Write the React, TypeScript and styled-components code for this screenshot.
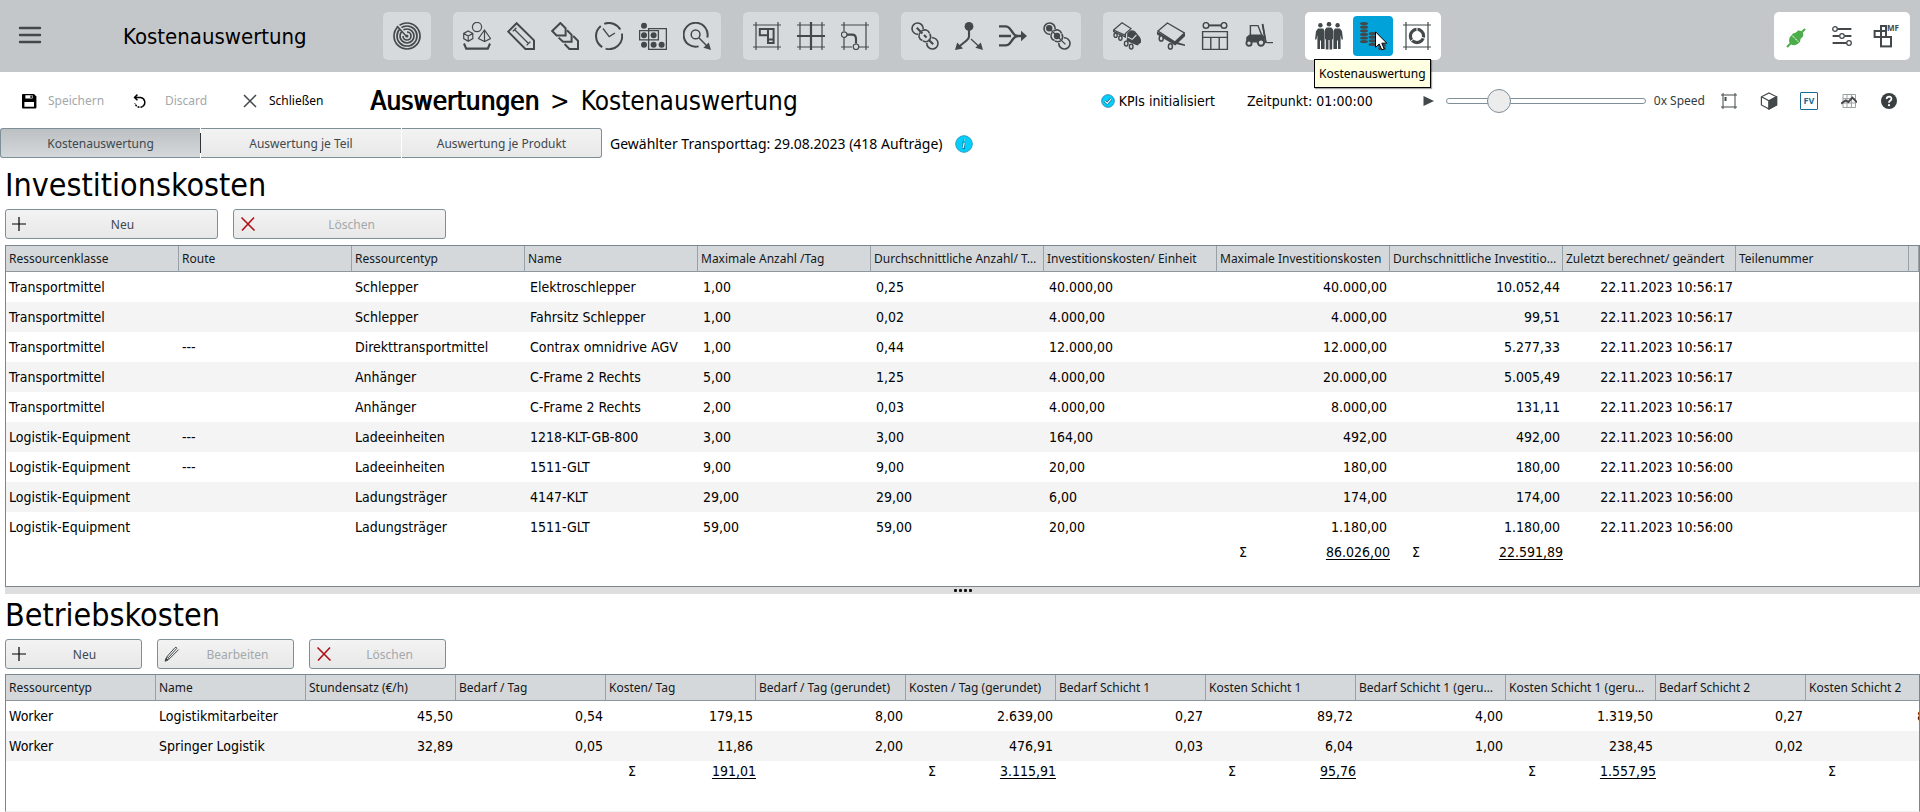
import React from "react";
import styled, { createGlobalStyle, css } from "styled-components";

const BODY_FONT = '"DejaVu Sans Condensed", "DejaVu Sans", sans-serif';
const SMALL_FONT = '"Noto Sans", "Open Sans", sans-serif';
const INK = "#43484b";
const LINE = "#7f8f98";

const GlobalStyle = createGlobalStyle`
  *, *::before, *::after { box-sizing: border-box; }
  body {
    margin: 0;
    background: #fff;
    color: #000;
    font-family: ${BODY_FONT};
    font-size: 14px;
  }
  button { font: inherit; color: inherit; padding: 0; margin: 0; border: 0; background: none; }
  h1, h2 { margin: 0; font-weight: 400; }
`;

/* ---------- page frame ---------- */

const Page = styled.div`
  display: flex;
  flex-direction: column;
  min-height: 100vh;
  overflow-x: hidden;
`;

const TopBar = styled.header`
  display: flex;
  align-items: center;
  height: 72px;
  padding-right: 10px;
  background: #c4c7ca;
`;

const TitleArea = styled.div`
  display: flex;
  align-items: center;
  flex: 0 0 383px;
  padding-left: 18px;
  gap: 81px;
`;

const AppTitle = styled.h1`
  padding-top: 2px;
  font-size: 22px;
  line-height: 28px;
`;

const Groups = styled.nav`
  display: flex;
  gap: 22px;
`;

const Group = styled.div<{ $light?: boolean; $end?: boolean }>`
  display: flex;
  gap: 4px;
  padding: 4px;
  border-radius: 5px;
  background: ${(p) => (p.$light ? "#fff" : "#d6dadd")};
  ${(p) => p.$end && css`margin-left: auto;`}
`;

const ToolWrap = styled.div`
  position: relative;
  display: flex;
`;

const ToolButton = styled.button<{ $active?: boolean }>`
  display: flex;
  align-items: center;
  justify-content: center;
  width: 40px;
  height: 40px;
  border-radius: 4px;
  background: ${(p) => (p.$active ? "#00a2d9" : "transparent")};
`;

const Tooltip = styled.div`
  position: absolute;
  z-index: 2;
  top: 43px;
  left: -39px;
  padding: 5px 4px 4px;
  border: 1px solid #000;
  background: #ffffe1;
  box-shadow: 1px 1px 1px rgba(0, 0, 0, 0.35);
  font-family: ${SMALL_FONT};
  font-size: 12px;
  line-height: 18px;
  white-space: nowrap;
`;

const Pointer = styled.svg`
  position: absolute;
  z-index: 3;
  top: 15px;
  left: 22px;
`;

/* ---------- command bar ---------- */

const CommandBar = styled.div`
  display: flex;
  align-items: center;
  height: 56px;
  padding: 1px 19px 0 20px;
`;

const Commands = styled.div`
  display: flex;
  align-items: center;
  flex: 0 0 350px;
`;

const Command = styled.button<{ $width: number; $gap?: number }>`
  display: flex;
  align-items: center;
  gap: ${(p) => p.$gap ?? 12}px;
  width: ${(p) => p.$width}px;
  font-family: ${SMALL_FONT};
  font-size: 12px;
  line-height: 18px;
  &:disabled { color: #a3a8ab; }
`;

const Breadcrumb = styled.h2`
  display: flex;
  gap: 11px;
  font-size: 26px;
  line-height: 32px;
  white-space: nowrap;
`;

const Crumb = styled.span`
  text-shadow: 1px 0 0 #000;
`;

const Status = styled.div`
  display: flex;
  align-items: center;
  gap: 32px;
  margin-left: auto;
  white-space: nowrap;
  line-height: 20px;
`;

const StatusItem = styled.span`
  display: flex;
  align-items: center;
  gap: 4px;
`;

const Playback = styled.div`
  display: flex;
  align-items: center;
  gap: 12px;
  margin-left: 18px;
`;

const Speed = styled.label`
  display: flex;
  align-items: center;
  gap: 8px;
  color: #333d42;
  font-family: ${SMALL_FONT};
  font-size: 12px;
`;

const Range = styled.input`
  appearance: none;
  width: 200px;
  height: 24px;
  margin: 0;
  background: transparent;
  &::-webkit-slider-runnable-track {
    height: 6px;
    border: 1px solid ${LINE};
    border-radius: 3px;
    background: #fff;
  }
  &::-webkit-slider-thumb {
    appearance: none;
    width: 24px;
    height: 24px;
    margin-top: -10px;
    border: 1px solid ${LINE};
    border-radius: 50%;
    background: #ececec;
  }
`;

const ViewTools = styled.div`
  display: flex;
  margin-left: -28px;
`;

const ViewButton = styled.button`
  display: flex;
  align-items: center;
  justify-content: center;
  width: 40px;
  height: 24px;
  &:last-child { width: 24px; margin-left: 8px; }
`;

const FvBadge = styled.span`
  width: 18px;
  height: 18px;
  border: 1px solid #1a6a94;
  border-radius: 1px;
  color: #1a6a94;
  font-family: ${SMALL_FONT};
  font-size: 9px;
  font-weight: 700;
  line-height: 16px;
  text-align: center;
`;

/* ---------- tabs ---------- */

const TabRow = styled.div`
  display: flex;
  align-items: center;
  gap: 8px;
`;

const Tabs = styled.div`
  display: flex;
  gap: 1px;
`;

const DayInfo = styled.div`
  display: flex;
  align-items: center;
  gap: 12px;
  padding-top: 1px;
  font-family: ${SMALL_FONT};
  line-height: 20px;
`;

const InfoButton = styled.button`
  display: flex;
`;

const Tab = styled.button<{ $active?: boolean }>`
  position: relative;
  width: 200px;
  height: 30px;
  padding-top: 2px;
  border: solid ${LINE};
  border-width: 1px 0;
  background: linear-gradient(#f3f3f3, #e8e8e8);
  color: #3d494f;
  font-family: ${SMALL_FONT};
  font-size: 12px;
  line-height: 18px;
  &:first-child { border-left-width: 1px; border-radius: 3px 0 0 3px; }
  &:last-child { border-right-width: 1px; border-radius: 0 3px 3px 0; }
  ${(p) =>
    p.$active &&
    css`
      background: linear-gradient(#bcc0c2, #d5d8da);
      &::after {
        content: "";
        position: absolute;
        top: 4px;
        right: -1px;
        width: 1px;
        height: 20px;
        background: #2f3538;
      }
    `}
`;

/* ---------- sections ---------- */

const Section = styled.section<{ $grow?: boolean }>`
  display: flex;
  flex-direction: column;
  padding-left: 5px;
  ${(p) => p.$grow && css`flex: 1;`}
`;

const SectionTitle = styled.h2<{ $top: number }>`
  padding-top: ${(p) => p.$top}px;
  font-size: 32px;
  line-height: 38px;
`;

const Actions = styled.div<{ $bottom: number }>`
  display: flex;
  gap: 15px;
  padding: 5px 0 ${(p) => p.$bottom}px;
`;

const ActionButton = styled.button<{ $wide?: boolean }>`
  display: flex;
  align-items: center;
  width: ${(p) => (p.$wide ? 213 : 137)}px;
  height: 30px;
  padding: 0 6px;
  border: 1px solid ${LINE};
  border-radius: 3px;
  background: linear-gradient(#f3f3f3, #e8e8e8);
  color: #3d494f;
  font-family: ${SMALL_FONT};
  font-size: 12px;
  line-height: 18px;
  &:disabled { color: #a3a8ab; }
`;

const ActionLabel = styled.span`
  flex: 1;
  padding: 1px 0 0 8px;
  text-align: center;
`;

const Panel = styled.div<{ $grow?: boolean }>`
  overflow: hidden;
  border: 1px solid #7d868d;
  ${(p) =>
    p.$grow
      ? css`flex: 1; border-bottom-color: #efefef;`
      : css`padding-bottom: 24px;`}
`;

const Table = styled.table<{ $width: string }>`
  width: ${(p) => p.$width};
  border-collapse: separate;
  border-spacing: 0;
  table-layout: fixed;
`;

const Col = styled.col<{ $width?: number }>`
  ${(p) => p.$width && css`width: ${p.$width}px;`}
`;

const Th = styled.th<{ $end: number }>`
  height: 26px;
  padding: 1px ${(p) => p.$end}px 0 3px;
  overflow: hidden;
  border-right: 1px solid #98a1a7;
  border-bottom: 1px solid #8d979d;
  background: #d4d8da;
  color: #15181a;
  font-family: ${SMALL_FONT};
  font-size: 12px;
  font-weight: 400;
  line-height: 18px;
  text-align: left;
  text-overflow: ellipsis;
  white-space: nowrap;
`;

const Row = styled.tr`
  &:nth-child(even) { background: #f4f4f4; }
`;

const Td = styled.td<{ $align: Align }>`
  height: 30px;
  padding: 0 3px 0 ${(p) => (p.$align === "inset" ? 5 : 3)}px;
  line-height: 18px;
  text-align: ${(p) => (p.$align === "right" ? "right" : "left")};
  white-space: nowrap;
`;

const SumCell = styled.td`
  height: 20px;
  padding: 0;
  line-height: 18px;
`;

const Sum = styled.div`
  display: flex;
  justify-content: space-between;
  padding-left: 22px;
`;

const SumValue = styled.span`
  text-decoration: underline;
  text-underline-offset: 2px;
`;

const Splitter = styled.div`
  display: flex;
  align-items: center;
  justify-content: center;
  gap: 2px;
  height: 7px;
  margin-left: 5px;
  background: #dedede;
`;

const Dot = styled.i`
  width: 3px;
  height: 3px;
  border-radius: 1px;
  background: #111;
`;

/* ---------- icons ---------- */

const Ic = ({ children, size = 28, box = 28 }: { children: React.ReactNode; size?: number; box?: number }) => (
  <svg width={size} height={size} viewBox={`0 0 ${box} ${box}`} fill="none" stroke={INK} strokeWidth="1.2" aria-hidden="true">
    {children}
  </svg>
);

const Frame = () => <path d="M3 0V28M25 0V28M0 3H28M0 25H28" />;

const Radar = (
  <Ic>
    <g strokeWidth="1.7">
      <circle cx="14" cy="14" r="13" />
      <circle cx="14" cy="14" r="10" />
      <circle cx="14" cy="14" r="7" />
      <path d="M14 10a4 4 0 1 1-4 4" />
    </g>
    <path d="M14 14L3 1" stroke="#d6dadd" strokeWidth="2.6" />
    <path d="M14 15L4 4" strokeWidth="1.5" />
    <circle cx="14" cy="14" r="1.5" fill={INK} stroke="none" />
  </Ic>
);

const Shapes = (
  <Ic>
    <circle cx="14" cy="5" r="4.6" />
    <path d="M5.2 9L9.8 11.4V16.6L5.2 19.2L.7 16.6V11.4ZM.7 11.4L5.2 14L9.8 11.4M5.2 14V19" />
    <path d="M21.5 8L27.5 16.5L21.5 19.5L15.5 16.5ZM21.5 8V19.5" />
    <path d="M1 21.5L3.2 26.6H24.8L27 21.5" strokeWidth="2.1" />
  </Ic>
);

const Pencil = (
  <Ic>
    <path d="M1.2 9.6L9.6 1.2L27 18.4V27H18.4Z" strokeWidth="2" />
    <path d="M7.5 7.5L21.5 21.5M5.8 9.4L9.4 5.8M19.6 23.4L23.4 19.6" strokeWidth="1.3" />
  </Ic>
);

const Layers = (
  <Ic>
    <g strokeWidth="2">
      <path d="M1.2 9L9.4 1L14.6 6.2V13.4H5.6Z" />
      <path d="M16 8.2L20.6 12.8V19.8H12L7.6 15.6" />
      <path d="M22.2 14L27 18.8V27H18.4L13.6 22" />
    </g>
  </Ic>
);

const Clock = (
  <Ic>
    <path d="M9.2 1.9A13 13 0 0 1 25.3 7.6M26.9 11.6A13 13 0 0 1 10.6 26.6M7.2 25.1A13 13 0 0 1 5.8 4" strokeWidth="2" />
    <path d="M8 6.5L14.2 14.6L20 11" strokeWidth="1.3" />
  </Ic>
);

const Blocks = (
  <Ic>
    <path d="M.6 8.6H19.4V17.8H.6ZM9.6 6.6H27.4V27.4H9.6Z" strokeWidth="1.3" />
    <g fill={INK} stroke="none">
      <circle cx="5" cy="3.8" r="3" />
      <circle cx="5" cy="13.2" r="3" />
      <circle cx="14.6" cy="13.2" r="3" />
      <circle cx="5" cy="22.8" r="3" />
      <circle cx="14.6" cy="22.8" r="3" />
      <circle cx="22.6" cy="22.8" r="3" />
    </g>
  </Ic>
);

const Target = (
  <Ic>
    <path d="M24.3 15.6A12 12 0 1 0 15.6 24.4" strokeWidth="2" />
    <circle cx="12.6" cy="12.4" r="4.4" strokeWidth="1.5" />
    <path d="M15.8 15.8L23.5 23.5" strokeWidth="1.5" />
    <path d="M28 28L20.4 25.8L25.8 20.4Z" fill={INK} stroke="none" />
  </Ic>
);

const FramePlan = (
  <Ic>
    <Frame />
    <path d="M6.8 7H20.6V21H15V13.2H6.8ZM15 7V13.2M15 17.4H20.6" strokeWidth="2" />
  </Ic>
);

const Grid = (
  <Ic>
    <Frame />
    <path d="M14 0V28M0 14H28" strokeWidth="2.2" />
  </Ic>
);

const FrameRoute = (
  <Ic>
    <path d="M3 0V9M3 16V28M25 0V28M0 3H28M0 25H11M18 25H28" />
    <circle cx="3.2" cy="12.6" r="2.8" />
    <circle cx="15" cy="24.8" r="2.8" />
    <path d="M6 12.6H11Q15 12.6 15 17V21.6" strokeWidth="2.1" />
  </Ic>
);

const Chain = (
  <Ic>
    <g strokeWidth="1.6">
      <path d="M7 12.2A5.6 5.6 0 1 1 12.2 7M9.4 10.2A5 5 0 0 0 11.6 18.6M10.4 9.2A5 5 0 0 1 18.6 11.4" />
      <path d="M21 15.8A5.6 5.6 0 1 1 15.8 21M12 18.8A5 5 0 0 0 17.8 18.6M18.8 12A5 5 0 0 1 18.6 17.8" />
    </g>
    <path d="M5.8 5.8L11.4 11.4M13 13L15.6 15.6M17.4 17.4L22.2 22.2" strokeWidth="2.1" />
  </Ic>
);

const Split = (
  <Ic>
    <circle cx="14" cy="4.4" r="4.4" fill={INK} stroke="none" />
    <path d="M14 8V14.5Q14 16.5 11.5 18.5L4.5 24.2" strokeWidth="2.1" />
    <path d="M16 17L24 24.4" strokeWidth="1.3" />
    <path d="M0 28L2.2 20.6L8 26.4ZM28 28L20.4 25.8L25.8 20.4Z" fill={INK} stroke="none" />
  </Ic>
);

const Merge = (
  <Ic>
    <path d="M0 4.4H6.5Q9.4 4.4 11.4 7.4L14 11Q15.6 13.8 19 14H24M0 14H12M0 23.4H6.5Q9.4 23.4 11.4 20.6L14 17Q15.6 14.4 19 14" strokeWidth="2.4" />
    <path d="M28 14L22 8.8V19.2Z" fill={INK} stroke="none" />
  </Ic>
);

const ChainDots = (
  <Ic>
    <g strokeWidth="1.6">
      <path d="M7 12.2A5.6 5.6 0 1 1 12.2 7M9.4 10.2A5 5 0 0 0 11.6 18.6M10.4 9.2A5 5 0 0 1 18.6 11.4" />
      <path d="M21 15.8A5.6 5.6 0 1 1 15.8 21M12 18.8A5 5 0 0 0 17.8 18.6M18.8 12A5 5 0 0 1 18.6 17.8" />
    </g>
    <path d="M6 6L22.4 22.4" strokeWidth="1.3" />
    <g fill={INK} stroke="none">
      <circle cx="6.2" cy="6.2" r="3.2" />
      <circle cx="14" cy="14" r="3.2" />
    </g>
  </Ic>
);

const Truck = (
  <Ic>
    <path d="M.6 8L9 .8L18 6.6L12.4 11.6V15L.6 9.6ZM.6 8L12.4 13.4" strokeWidth="1.2" />
    <path d="M14.4 11.2L17 8.6Q20 7.6 22.2 9.6L26.8 15Q28.6 18 28 20.6L24.4 23.6L13.6 19Z" fill={INK} stroke="none" />
    <path d="M14.6 15L19.2 17.4L23.4 13" stroke="#d6dadd" strokeWidth="1.1" />
    <g fill="#d6dadd" strokeWidth="1.4">
      <ellipse cx="2.6" cy="13.2" rx="1.6" ry="2.2" />
      <ellipse cx="7.4" cy="16" rx="1.6" ry="2.2" />
      <ellipse cx="13.2" cy="21.6" rx="1.8" ry="2.5" />
      <ellipse cx="18.2" cy="24.6" rx="1.8" ry="2.5" />
    </g>
  </Ic>
);

const Trailer = (
  <Ic>
    <path d="M1 9L10.4 1L27.4 11L18 20Z" strokeWidth="1.4" />
    <path d="M0 9.4L18 20L28 10.6V14.2L18.2 23.6L0 12.6ZM20 20L28 22.6V24L19 22Z" fill={INK} stroke="none" />
    <g fill="#d6dadd" strokeWidth="1.5">
      <ellipse cx="4.2" cy="16.4" rx="2" ry="2.6" />
      <ellipse cx="13.4" cy="24.4" rx="2" ry="2.6" />
    </g>
  </Ic>
);

const Workbench = (
  <Ic>
    <path d="M1.6 9.6H26.4V27.4H1.6ZM1.6 15.4H26.4M9.8 15.4V27.4M18.2 15.4V27.4" strokeWidth="1.4" />
    <circle cx="5" cy="3.4" r="2.8" strokeWidth="1.5" />
    <circle cx="23" cy="3.4" r="2.8" strokeWidth="1.5" />
    <path d="M8 3.4H20" strokeWidth="2" />
  </Ic>
);

const Forklift = (
  <Ic>
    <path d="M5.4 14V3.6H13L17 14" strokeWidth="1.4" />
    <path d="M1.2 15.2L4.4 12.6H17.6L19.4 15V20.6H1.2Z" fill={INK} stroke="none" />
    <path d="M17.4 2.4L21 20.6M21.6 20.6H28" strokeWidth="1.3" />
    <path d="M17.6 2L20.8 20.8" strokeWidth="1.8" />
    <circle cx="4" cy="21.2" r="2.6" fill="#d6dadd" strokeWidth="1.9" />
    <circle cx="16" cy="20.6" r="3.2" fill="#d6dadd" strokeWidth="2" />
  </Ic>
);

const People = (
  <Ic>
    <g fill={INK} stroke="none">
      <circle cx="5.4" cy="3.2" r="2.2" />
      <circle cx="22.6" cy="3.2" r="2.2" />
      <circle cx="14" cy="2.2" r="2.3" />
      <path d="M3 6.4H8.2L9.6 9V27H6V18.4H5V27H2.4V13L1.4 17.4H0L1 9.2Z" />
      <path d="M25 6.4H19.8L18.4 9V27H22V18.4H23V27H25.6V13L26.6 17.4H28L27 9.2Z" />
      <path d="M11.6 5.4H16.4L18 7.6V17.2H17.2V27.6H14.5V18H13.5V27.6H10.8V17.2H10V7.6Z" />
    </g>
  </Ic>
);

const Coins = (
  <Ic>
    <g fill={INK} stroke="none">
      {[1.6, 5.2, 8.8, 12.4, 16, 19.6].map((y) => (
        <ellipse key={`a${y}`} cx="5" cy={y} rx="4" ry="1.6" />
      ))}
      {[11.6, 15.2, 18.8, 22.4].map((y) => (
        <ellipse key={`b${y}`} cx="13.6" cy={y} rx="4" ry="1.6" />
      ))}
      {[20, 23.4, 26.4].map((y) => (
        <ellipse key={`c${y}`} cx="23" cy={y} rx="4" ry="1.6" />
      ))}
    </g>
  </Ic>
);

const FrameRing = (
  <Ic>
    <Frame />
    <circle cx="14" cy="14" r="6.6" strokeWidth="3.2" />
    <path d="M14 14V5M14 14L22 16.4M14 14L7 20" stroke="#fff" strokeWidth="1" />
  </Ic>
);

const Plug = (
  <svg width="24" height="24" viewBox="0 -4 24 24" aria-hidden="true">
    <path d="M1 19L5 15M15 5L19 1" stroke="#4cae4a" strokeWidth="2" fill="none" />
    <path d="M3.6 9.4L7 5.4L10 4.6L12 2.6Q15 2 16.8 4.4Q18 6.8 16.6 9L14.6 10.8L14 14L10.8 16.6Q6.6 18.4 4 15.6Q2.2 12.6 3.6 9.4Z" fill="#4cae4a" />
    <path d="M6.2 7.6L12.6 14" stroke="#fff" strokeWidth="1" strokeDasharray="3 1" />
  </svg>
);

const Sliders = (
  <Ic size={20} box={20}>
    <path d="M5.6 3H19.4M.6 10H7M12.8 10H19.4M.6 17H14" strokeWidth="2" />
    <circle cx="3" cy="3" r="2.3" strokeWidth="1.3" />
    <circle cx="10" cy="10" r="2.3" strokeWidth="1.3" />
    <circle cx="17" cy="17" r="2.3" strokeWidth="1.3" />
  </Ic>
);

const ModuleMf = (
  <Ic>
    <g strokeWidth="2">
      <rect x="9" y="4" width="5" height="5" />
      <path d="M9 9V15H2.6V9H9M14 9V15" />
      <rect x="9" y="15" width="10" height="9.4" />
    </g>
    <text x="15" y="9" fill={INK} stroke="none" fontFamily="Noto Sans, sans-serif" fontSize="8" fontWeight="700">MF</text>
  </Ic>
);

const SaveIcon = (
  <svg width="18" height="16" viewBox="-1 0 18 16" aria-hidden="true">
    <path d="M1 2Q1 1 2 1H13L15.4 3.4V14.4Q15.4 15.4 14.4 15.4H2Q1 15.4 1 14.4Z" fill="#000" />
    <path d="M4.4 2.2H11.6V5.4H4.4ZM3.4 9H13V13.8H3.4Z" fill="#fff" />
    <path d="M9.4 2.6H10.8V5H9.4Z" fill="#000" />
  </svg>
);

const UndoIcon = (
  <svg width="14" height="14" viewBox="0 0 14 14" fill="none" stroke="#000" strokeWidth="1.5" aria-hidden="true">
    <path d="M1.6 3.4H7.6A5 5 0 0 1 9.4 12.6" />
    <path d="M4.4 .6L1.6 3.4L4.4 6.2" />
    <path d="M9.4 12.6A5 5 0 0 1 2 9" strokeDasharray="2 1" />
  </svg>
);

const CloseIcon = (
  <svg width="14" height="14" viewBox="0 0 14 14" aria-hidden="true">
    <path d="M1 1L13 13M13 1L1 13" stroke={INK} strokeWidth="1.5" />
  </svg>
);

const PlusIcon = (
  <svg width="14" height="16" viewBox="1 0 14 16" aria-hidden="true">
    <path d="M8 1V15M1 8H15" stroke="#000" strokeWidth="1.2" />
  </svg>
);

const DeleteIcon = (
  <svg width="16" height="16" viewBox="0 0 16 16" aria-hidden="true">
    <path d="M1.5 1.5L14.5 14.5M14 1.5L2 14.5" stroke="#b01116" strokeWidth="1.6" />
  </svg>
);

const EditIcon = (
  <svg width="16" height="16" viewBox="0 0 16 16" fill="none" stroke={INK} aria-hidden="true">
    <path d="M1.6 14.6L3 10.6L11 1.6Q12 .8 12.8 1.8M3 10.6L5.4 12.8M1.6 14.6L5.4 12.8L14.6 3.6M4.4 11.6L13 2.2" />
    <path d="M1 15.2L2.2 12L4 14Z" fill={INK} />
  </svg>
);

const CheckIcon = (
  <svg width="14" height="14" viewBox="0 0 14 14" aria-hidden="true">
    <circle cx="7" cy="7" r="6.3" fill="#00d0fb" stroke="#2c8fb8" />
    <path d="M3.8 7.2L6.2 9.4L10.4 4.6" fill="none" stroke="#1c5a80" strokeWidth="2.4" />
    <path d="M3.8 7.2L6.2 9.4L10.4 4.6" fill="none" stroke="#fff" strokeWidth="1.1" />
  </svg>
);

const InfoIcon = (
  <svg width="18" height="18" viewBox="0 0 18 18" aria-hidden="true">
    <circle cx="9" cy="9" r="8.3" fill="#00d0fb" stroke="#2c9cc4" />
    <path d="M9.8 4.2V5.4M9.2 7.6L8.2 12.8M7.6 7.8H9.4M7.8 13H9.8" stroke="#1c6c92" strokeWidth="2.4" fill="none" />
    <path d="M9.8 4.2V5.4M9.2 7.6L8.2 12.8" stroke="#fff" strokeWidth="1.2" fill="none" />
  </svg>
);

const PlayIcon = (
  <svg width="11" height="10" viewBox="0 0 11 10" aria-hidden="true">
    <path d="M.5 0L11 5L.5 10Z" fill={INK} />
  </svg>
);

const FrameMini = (
  <Ic size={16} box={16}>
    <path d="M2 0V16M14 0V16M0 2H16M0 14H16" strokeWidth="1" />
    <path d="M4.5 4V8" strokeWidth="2" />
  </Ic>
);

const CubeMini = (
  <Ic size={18} box={18}>
    <path d="M9 1L16.6 4.8V13L9 17L1.4 13V4.8ZM1.4 4.8L9 8.8L16.6 4.8M9 8.8V17" />
    <path d="M9 8.8L16.6 4.8V13L9 17Z" fill={INK} />
  </Ic>
);

const ChartMini = (
  <Ic size={16} box={16}>
    <path d="M2 1.5H14.5V14.5H2ZM6 1V15M10.4 1V15M2 5.6H14.5M2 10H14.5" stroke="#9ba0a3" strokeWidth="1" />
    <path d="M0 10.6L4.6 7.4L7.4 9L11.4 4.6L16 9.4" strokeWidth="1.9" />
  </Ic>
);

const HelpMini = (
  <svg width="16" height="16" viewBox="0 0 16 16" aria-hidden="true">
    <circle cx="8" cy="8" r="8" fill="#3a3f42" />
    <path d="M5.6 6Q5.8 3.6 8.2 3.6Q10.6 3.8 10.4 6Q10.2 7.2 8.8 8Q8 8.6 8 9.8" fill="none" stroke="#fff" strokeWidth="1.7" />
    <circle cx="8" cy="12.2" r="1.1" fill="#fff" />
  </svg>
);

const MenuIcon = (
  <svg width="24" height="18" viewBox="0 0 24 18" aria-hidden="true">
    <path d="M2 2H22M2 9H22M2 16H22" stroke={INK} strokeWidth="2.4" strokeLinecap="round" />
  </svg>
);

/* ---------- data ---------- */

type Align = "left" | "inset" | "right";
type Column = { title: string; align: Align };
type Tool = { label: string; icon: React.ReactNode };

const toolGroups: Tool[][] = [
  [{ label: "Radar", icon: Radar }],
  [
    { label: "Objekte", icon: Shapes },
    { label: "Planung", icon: Pencil },
    { label: "Varianten", icon: Layers },
    { label: "Zeiten", icon: Clock },
    { label: "Bausteine", icon: Blocks },
    { label: "Ziele", icon: Target },
  ],
  [
    { label: "Layout", icon: FramePlan },
    { label: "Raster", icon: Grid },
    { label: "Wege", icon: FrameRoute },
  ],
  [
    { label: "Verkettung", icon: Chain },
    { label: "Aufteilung", icon: Split },
    { label: "Zusammenführung", icon: Merge },
    { label: "Prozesskette", icon: ChainDots },
  ],
  [
    { label: "Routenzug", icon: Truck },
    { label: "Anhänger", icon: Trailer },
    { label: "Arbeitsplatz", icon: Workbench },
    { label: "Stapler", icon: Forklift },
  ],
];

const investColumns: Column[] = [
  { title: "Ressourcenklasse", align: "left" },
  { title: "Route", align: "left" },
  { title: "Ressourcentyp", align: "left" },
  { title: "Name", align: "inset" },
  { title: "Maximale Anzahl /Tag", align: "inset" },
  { title: "Durchschnittliche Anzahl/ Tag", align: "inset" },
  { title: "Investitionskosten/ Einheit", align: "inset" },
  { title: "Maximale Investitionskosten", align: "right" },
  { title: "Durchschnittliche Investitionskosten", align: "right" },
  { title: "Zuletzt berechnet/ geändert", align: "right" },
  { title: "Teilenummer", align: "left" },
  { title: "", align: "left" },
];

const investRows: string[][] = [
  ["Transportmittel", "", "Schlepper", "Elektroschlepper", "1,00", "0,25", "40.000,00", "40.000,00", "10.052,44", "22.11.2023 10:56:17", "", ""],
  ["Transportmittel", "", "Schlepper", "Fahrsitz Schlepper", "1,00", "0,02", "4.000,00", "4.000,00", "99,51", "22.11.2023 10:56:17", "", ""],
  ["Transportmittel", "---", "Direkttransportmittel", "Contrax omnidrive AGV", "1,00", "0,44", "12.000,00", "12.000,00", "5.277,33", "22.11.2023 10:56:17", "", ""],
  ["Transportmittel", "", "Anhänger", "C-Frame 2 Rechts", "5,00", "1,25", "4.000,00", "20.000,00", "5.005,49", "22.11.2023 10:56:17", "", ""],
  ["Transportmittel", "", "Anhänger", "C-Frame 2 Rechts", "2,00", "0,03", "4.000,00", "8.000,00", "131,11", "22.11.2023 10:56:17", "", ""],
  ["Logistik-Equipment", "---", "Ladeeinheiten", "1218-KLT-GB-800", "3,00", "3,00", "164,00", "492,00", "492,00", "22.11.2023 10:56:00", "", ""],
  ["Logistik-Equipment", "---", "Ladeeinheiten", "1511-GLT", "9,00", "9,00", "20,00", "180,00", "180,00", "22.11.2023 10:56:00", "", ""],
  ["Logistik-Equipment", "", "Ladungsträger", "4147-KLT", "29,00", "29,00", "6,00", "174,00", "174,00", "22.11.2023 10:56:00", "", ""],
  ["Logistik-Equipment", "", "Ladungsträger", "1511-GLT", "59,00", "59,00", "20,00", "1.180,00", "1.180,00", "22.11.2023 10:56:00", "", ""],
];

const investSums: Record<number, string> = { 7: "86.026,00", 8: "22.591,89" };

const operatingColumns: Column[] = [
  { title: "Ressourcentyp", align: "left" },
  { title: "Name", align: "left" },
  { title: "Stundensatz (€/h)", align: "right" },
  { title: "Bedarf / Tag", align: "right" },
  { title: "Kosten/ Tag", align: "right" },
  { title: "Bedarf / Tag (gerundet)", align: "right" },
  { title: "Kosten / Tag (gerundet)", align: "right" },
  { title: "Bedarf Schicht 1", align: "right" },
  { title: "Kosten Schicht 1", align: "right" },
  { title: "Bedarf Schicht 1 (gerundet)", align: "right" },
  { title: "Kosten Schicht 1 (gerundet)", align: "right" },
  { title: "Bedarf Schicht 2", align: "right" },
  { title: "Kosten Schicht 2", align: "right" },
];

const operatingRows: string[][] = [
  ["Worker", "Logistikmitarbeiter", "45,50", "0,54", "179,15", "8,00", "2.639,00", "0,27", "89,72", "4,00", "1.319,50", "0,27", "89,72"],
  ["Worker", "Springer Logistik", "32,89", "0,05", "11,86", "2,00", "476,91", "0,03", "6,04", "1,00", "238,45", "0,02", ""],
];

const operatingSums: Record<number, string> = { 4: "191,01", 6: "3.115,91", 8: "95,76", 10: "1.557,95", 12: "" };

/* ---------- parts ---------- */

type GridProps = {
  label: string;
  columns: Column[];
  rows: string[][];
  sums: Record<number, string>;
  width: string;
  headEnd: number;
  colWidths: (number | undefined)[];
};

function DataTable({ label, columns, rows, sums, width, headEnd, colWidths }: GridProps) {
  return (
    <Table $width={width} aria-label={label}>
      <colgroup>
        {colWidths.map((w, i) => (
          <Col key={i} $width={w} />
        ))}
      </colgroup>
      <thead>
        <tr>
          {columns.map((c, i) => (
            <Th key={i} scope="col" $end={headEnd}>{c.title}</Th>
          ))}
        </tr>
      </thead>
      <tbody>
        {rows.map((r, i) => (
          <Row key={i}>
            {r.map((v, j) => (
              <Td key={j} $align={columns[j].align}>{v}</Td>
            ))}
          </Row>
        ))}
      </tbody>
      <tfoot>
        <tr>
          {columns.map((_, i) => (
            <SumCell key={i}>
              {i in sums && (
                <Sum>
                  <span>Σ</span>
                  <SumValue>{sums[i]}</SumValue>
                </Sum>
              )}
            </SumCell>
          ))}
        </tr>
      </tfoot>
    </Table>
  );
}

export default function App() {
  const [speed, setSpeed] = React.useState(23);
  return (
    <Page>
      <GlobalStyle />
      <TopBar>
        <TitleArea>
          <button aria-label="Menü">{MenuIcon}</button>
          <AppTitle>Kostenauswertung</AppTitle>
        </TitleArea>
        <Groups>
          {toolGroups.map((g, i) => (
            <Group key={i}>
              {g.map((t) => (
                <ToolButton key={t.label} aria-label={t.label}>{t.icon}</ToolButton>
              ))}
            </Group>
          ))}
          <Group $light>
            <ToolButton aria-label="Personal">{People}</ToolButton>
            <ToolWrap>
              <ToolButton $active aria-label="Kostenauswertung" aria-describedby="tool-tip">{Coins}</ToolButton>
              <Tooltip id="tool-tip" role="tooltip">Kostenauswertung</Tooltip>
              <Pointer width="13" height="20" viewBox="0 0 13 20" aria-hidden="true">
                <path d="M.5 .8V16.4L4.2 13L6.8 18.8L9.2 17.8L6.8 12.2H11.8Z" fill="#fff" stroke="#000" />
              </Pointer>
            </ToolWrap>
            <ToolButton aria-label="Flächenauswertung">{FrameRing}</ToolButton>
          </Group>
        </Groups>
        <Group $light $end>
          <ToolButton aria-label="Verbindung">{Plug}</ToolButton>
          <ToolButton aria-label="Einstellungen">{Sliders}</ToolButton>
          <ToolButton aria-label="Module">{ModuleMf}</ToolButton>
        </Group>
      </TopBar>

      <CommandBar>
        <Commands>
          <Command $width={113} $gap={10} disabled>{SaveIcon}Speichern</Command>
          <Command $width={110} $gap={18} disabled>{UndoIcon}Discard</Command>
          <Command $width={100}>{CloseIcon}Schließen</Command>
        </Commands>
        <Breadcrumb>
          <Crumb>Auswertungen</Crumb>
          <span>&gt;</span>
          <span>Kostenauswertung</span>
        </Breadcrumb>
        <Status>
          <StatusItem>{CheckIcon}KPIs initialisiert</StatusItem>
          <StatusItem>Zeitpunkt: 01:00:00</StatusItem>
          <Playback>
            <button aria-label="Abspielen">{PlayIcon}</button>
            <Speed>
              <Range type="range" min={0} max={100} value={speed} onChange={(e) => setSpeed(Number(e.target.value))} />
              0x Speed
            </Speed>
          </Playback>
          <ViewTools>
            <ViewButton aria-label="Layoutansicht">{FrameMini}</ViewButton>
            <ViewButton aria-label="3D-Ansicht">{CubeMini}</ViewButton>
            <ViewButton><FvBadge>FV</FvBadge></ViewButton>
            <ViewButton aria-label="Diagramm">{ChartMini}</ViewButton>
            <ViewButton aria-label="Hilfe">{HelpMini}</ViewButton>
          </ViewTools>
        </Status>
      </CommandBar>

      <TabRow>
        <Tabs role="tablist">
          <Tab role="tab" aria-selected $active>Kostenauswertung</Tab>
          <Tab role="tab">Auswertung je Teil</Tab>
          <Tab role="tab">Auswertung je Produkt</Tab>
        </Tabs>
        <DayInfo>
          <span>Gewählter Transporttag: 29.08.2023 (418 Aufträge)</span>
          <InfoButton aria-label="Information">{InfoIcon}</InfoButton>
        </DayInfo>
      </TabRow>

      <Section>
        <SectionTitle $top={8}>Investitionskosten</SectionTitle>
        <Actions $bottom={6}>
          <ActionButton $wide>{PlusIcon}<ActionLabel>Neu</ActionLabel></ActionButton>
          <ActionButton $wide disabled>{DeleteIcon}<ActionLabel>Löschen</ActionLabel></ActionButton>
        </Actions>
        <Panel>
          <DataTable
            label="Investitionskosten"
            columns={investColumns}
            rows={investRows}
            sums={investSums}
            width="100%"
            headEnd={3}
            colWidths={investColumns.map((_, i) => (i === 11 ? 10 : undefined))}
          />
        </Panel>
      </Section>

      <Splitter>
        <Dot /><Dot /><Dot /><Dot />
      </Splitter>

      <Section $grow>
        <SectionTitle $top={2}>Betriebskosten</SectionTitle>
        <Actions $bottom={5}>
          <ActionButton>{PlusIcon}<ActionLabel>Neu</ActionLabel></ActionButton>
          <ActionButton disabled>{EditIcon}<ActionLabel>Bearbeiten</ActionLabel></ActionButton>
          <ActionButton disabled>{DeleteIcon}<ActionLabel>Löschen</ActionLabel></ActionButton>
        </Actions>
        <Panel $grow>
          <DataTable
            label="Betriebskosten"
            columns={operatingColumns}
            rows={operatingRows}
            sums={operatingSums}
            width="1950px"
            headEnd={7}
            colWidths={operatingColumns.map(() => 150)}
          />
        </Panel>
      </Section>
    </Page>
  );
}
